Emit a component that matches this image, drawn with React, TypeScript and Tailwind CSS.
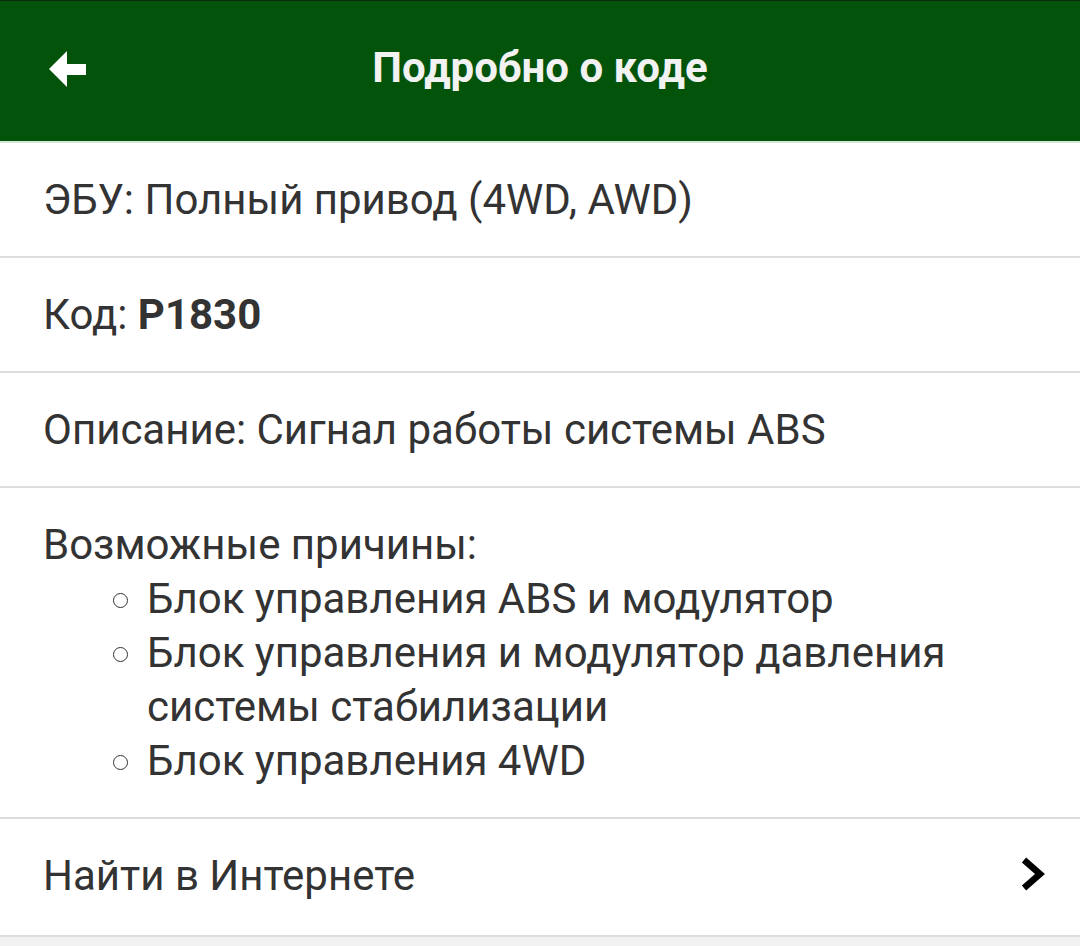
import React from "react";

const causes: string[] = [
  "Блок управления ABS и модулятор",
  "Блок управления и модулятор давления системы стабилизации",
  "Блок управления 4WD",
];

const Row: React.FC<{ children: React.ReactNode }> = ({ children }) => (
  <div className="px-[43px] pt-[30px] pb-[29px] leading-[54px] border-b-2 border-[#dddddd]">
    {children}
  </div>
);

const App: React.FC = () => {
  return (
    <div
      className="min-h-[946px] bg-[#f2f2f2] text-[#333333] text-[42px]"
      style={{ fontFamily: "Roboto, 'Noto Sans', sans-serif" }}
    >
      <header className="relative h-[143px] bg-[#03540a] border-t border-[#0b2a0d] border-b-2 border-b-[#d4e6d4] flex items-center justify-center">
        <button className="absolute left-[49px] top-[50px] w-[38px] h-[37px]">
          <svg viewBox="0 0 38 37" className="w-full h-full">
            <path d="M0 18 L18 0 L18 13 L37 13 L37 24 L18 24 L18 36 Z" fill="#ffffff" />
          </svg>
        </button>
        <h1 className="text-[#f2f2f2] font-bold text-[42px] mt-[-8px]">Подробно о коде</h1>
      </header>

      <main className="bg-white">
        <Row>ЭБУ: Полный привод (4WD, AWD)</Row>
        <Row>
          Код: <span className="font-bold">P1830</span>
        </Row>
        <Row>Описание: Сигнал работы системы ABS</Row>
        <div className="px-[43px] pt-[30px] pb-[29px] leading-[54px] border-b-2 border-[#dddddd]">
          <div>Возможные причины:</div>
          <ul className="pl-[104px] pr-[40px]">
            {causes.map((c) => (
              <li key={c} className="relative">
                <span className="absolute left-[-34px] top-[21px] w-[15px] h-[15px] rounded-full border-[1.5px] border-[#333333]" />
                {c}
              </li>
            ))}
          </ul>
        </div>
        <div className="flex items-center justify-between pl-[43px] pr-[34px] pt-[30px] pb-[32px] leading-[54px] border-b-2 border-[#dddddd]">
          <span>Найти в Интернете</span>
          <svg viewBox="0 0 26 36" className="w-[26px] h-[36px] mt-[-4px]">
            <path d="M4 4 L20 18 L4 32" fill="none" stroke="#000000" strokeWidth="6.5" strokeLinejoin="miter" />
          </svg>
        </div>
      </main>
    </div>
  );
};

export default App;
